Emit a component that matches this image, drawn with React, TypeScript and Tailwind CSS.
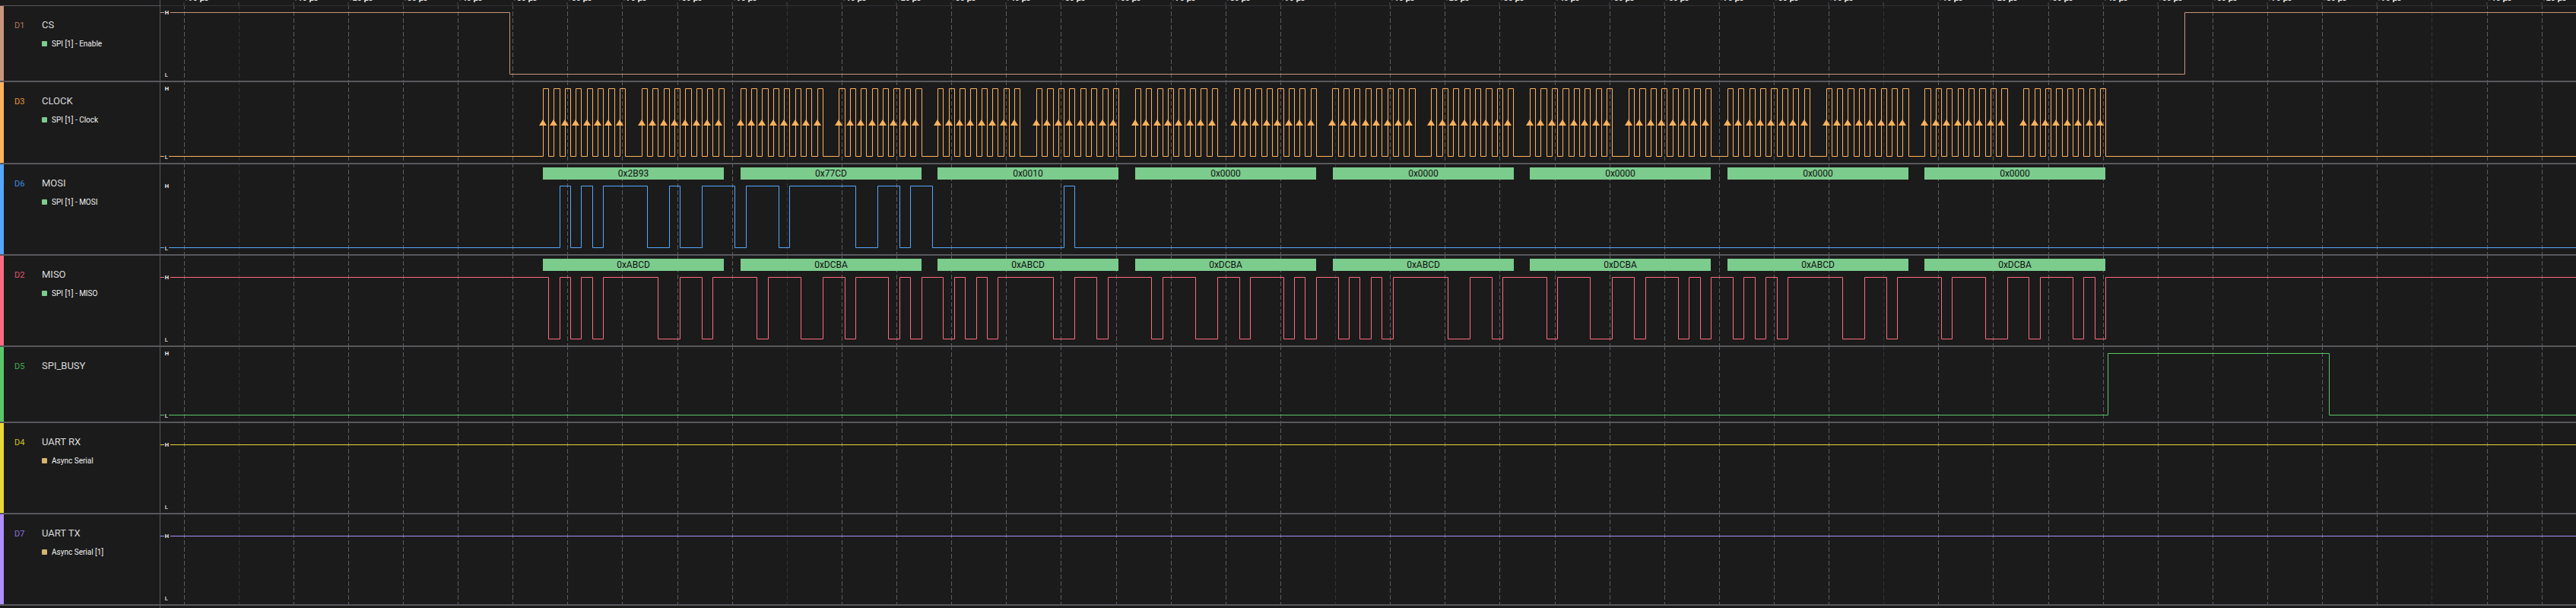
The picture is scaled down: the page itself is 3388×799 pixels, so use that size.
const BASE = 242.01;
const STEP = 72.12;
const PERIOD = STEP / 5;
const HALF = PERIOD / 2;
const START = 714.4;
const LEFT = 211;
const WIDTH = 3388 - LEFT;

const wordStart = (w: number) => START + w * 18 * PERIOD;
const rise = (w: number, i: number) => wordStart(w) + (i + (i > 7 ? 1 : 0)) * PERIOD;
const fall = (w: number, i: number) => rise(w, i) + HALF;

const MOSI = [0x2b93, 0x77cd, 0x0010, 0, 0, 0, 0, 0];
const MISO = [0xabcd, 0xdcba, 0xabcd, 0xdcba, 0xabcd, 0xdcba, 0xabcd, 0xdcba];
const hex = (v: number) => '0x' + v.toString(16).toUpperCase().padStart(4, '0');

const clockEdges: number[] = [];
const clockRises: number[] = [];
for (let w = 0; w < 8; w++) {
  for (let i = 0; i < 16; i++) {
    clockEdges.push(rise(w, i), fall(w, i));
    clockRises.push(rise(w, i));
  }
}

// Data lines change on the falling clock edge; "early" lines load the next word right after the last bit.
function dataEdges(words: number[], idle: number, early: boolean) {
  const edges: number[] = [];
  let level = idle;
  const set = (v: number, t: number) => {
    if (v !== level) {
      edges.push(t);
      level = v;
    }
  };
  words.forEach((word, w) => {
    for (let i = 0; i < 16; i++) {
      const bit = (word >> (15 - i)) & 1;
      const t = i > 0 ? fall(w, i - 1) : early && w > 0 ? fall(w - 1, 15) : wordStart(w) - HALF;
      set(bit, t);
    }
  });
  set(idle, early ? fall(7, 15) : wordStart(8) - HALF);
  return edges;
}

type Channel = {
  id: string;
  name: string;
  sub?: string;
  dot?: string;
  bar: string;
  text: string;
  stroke: string;
  height: string;
  h: number;
  hi: number;
  lo: number;
  start: number;
  edges: number[];
  words?: number[];
  arrows?: boolean;
};

const CHANNELS: Channel[] = [
  { id: 'D1', name: 'CS', sub: 'SPI [1] - Enable', dot: 'bg-[#7ccc8d]', bar: 'bg-[#c9967c]', text: 'text-[#b0775a]', stroke: '#c9967c', height: 'h-[100px]', h: 98, hi: 8, lo: 89, start: 1, edges: [670, 2873] },
  { id: 'D3', name: 'CLOCK', sub: 'SPI [1] - Clock', dot: 'bg-[#7ccc8d]', bar: 'bg-[#ffb25c]', text: 'text-[#e5963c]', stroke: '#ffb25c', height: 'h-[108px]', h: 106, hi: 8, lo: 97, start: 0, edges: clockEdges, arrows: true },
  { id: 'D6', name: 'MOSI', sub: 'SPI [1] - MOSI', dot: 'bg-[#7ccc8d]', bar: 'bg-[#54a8ff]', text: 'text-[#3b8be0]', stroke: '#54a8ff', height: 'h-[120px]', h: 118, hi: 28, lo: 109, start: 0, edges: dataEdges(MOSI, 0, false), words: MOSI },
  { id: 'D2', name: 'MISO', sub: 'SPI [1] - MISO', dot: 'bg-[#7ccc8d]', bar: 'bg-[#ff6b7e]', text: 'text-[#e0566a]', stroke: '#ff6b7e', height: 'h-[120px]', h: 118, hi: 28, lo: 109, start: 1, edges: dataEdges(MISO, 1, true), words: MISO },
  { id: 'D5', name: 'SPI_BUSY', bar: 'bg-[#59c767]', text: 'text-[#41b050]', stroke: '#59c767', height: 'h-[100px]', h: 98, hi: 8, lo: 89, start: 0, edges: [2772, 3063] },
  { id: 'D4', name: 'UART RX', sub: 'Async Serial', dot: 'bg-[#d4b56d]', bar: 'bg-[#e8d834]', text: 'text-[#cfc02a]', stroke: '#e8d834', height: 'h-[120px]', h: 118, hi: 28, lo: 109, start: 1, edges: [] },
  { id: 'D7', name: 'UART TX', sub: 'Async Serial [1]', dot: 'bg-[#d4b56d]', bar: 'bg-[#ae8fff]', text: 'text-[#8d70dc]', stroke: '#ae8fff', height: 'h-[120px]', h: 118, hi: 28, lo: 109, start: 1, edges: [] },
];

function wave(ch: Channel) {
  let level = ch.start;
  const y = () => (level ? ch.hi : ch.lo) + 0.5;
  let d = `M0 ${y()}`;
  for (const e of ch.edges) {
    d += `H${Math.floor(e) - LEFT + 0.5}`;
    level = 1 - level;
    d += `V${y()}`;
  }
  return d + `H${WIDTH}`;
}

const TICKS = Array.from({ length: 44 }, (_, i) => ({
  x: Math.floor(BASE + i * STEP) - LEFT,
  major: i % 10 === 1,
  label: `+${((i + 9) % 10) * 10} µs`,
}));

function Lane({ ch }: { ch: Channel }) {
  return (
    <div className="relative min-w-0 flex-1 overflow-hidden">
      <svg className="block" width={WIDTH} height={ch.h} fill="none">
        {TICKS.map((t) => (
          <path key={t.x} d={`M${t.x + 0.5} 0V${ch.h}`} stroke={t.major ? '#343437' : '#5d5d62'} strokeDasharray="6 3" strokeDashoffset="2" />
        ))}
        <path d={wave(ch)} stroke={ch.stroke} />
        {ch.arrows &&
          clockRises.map((r) => {
            const x = Math.floor(r) - LEFT;
            return <path key={r} d={`M${x} 49L${x + 5} 57H${x - 5}Z`} fill={ch.stroke} />;
          })}
        <rect x="5" y={ch.hi - 4} width="8" height="9" rx="1" fill="#1b1b1b" />
        <rect x="5" y={ch.lo - 4} width="6" height="9" rx="1" fill="#1b1b1b" />
        <text x="5.7" y={ch.hi + 3} fontSize="7.5" fontWeight="700" fill="#eee" fontFamily="Roboto, sans-serif">H</text>
        <text x="5.7" y={ch.lo + 4} fontSize="7.5" fontWeight="700" fill="#ccc" fontFamily="Roboto, sans-serif">L</text>
      </svg>
      {ch.words?.map((w, i) => (
        <div
          key={i}
          className="absolute top-1 flex h-4 w-[238px] items-center justify-center bg-[#7ccc8d] text-[12px] leading-4 text-[#111]"
          style={{ left: Math.floor(wordStart(i) + 0.1) - LEFT }}
        >
          {hex(w)}
        </div>
      ))}
    </div>
  );
}

export default function App() {
  return (
    <div className="flex h-[799px] w-[3388px] flex-col overflow-hidden bg-[#1b1b1b] font-['Roboto',sans-serif]">
      <header className="flex h-2 shrink-0">
        <div className="w-[211px] shrink-0 border-r border-b border-[#58585d]" />
        <div className="flex-1 overflow-hidden border-b border-[#303033]">
          <svg className="block" width={WIDTH} height="7">
            {TICKS.map((t) => (
              <g key={t.x}>
                <rect x={t.x - 1} y="3" width="2" height="4" fill="#343437" />
                {!t.major && (
                  <text x={t.x} y="1.2" fontSize="10.5" fontWeight="700" fill="#e8e8e8" fontFamily="Roboto, sans-serif">
                    {t.label}
                  </text>
                )}
              </g>
            ))}
          </svg>
        </div>
      </header>
      {CHANNELS.map((ch) => (
        <section key={ch.id} className={`flex shrink-0 border-b-2 border-[#58585d] ${ch.height}`}>
          <div className="flex w-[211px] shrink-0 border-r border-[#58585d]">
            <div className={`w-[5px] ${ch.bar}`} />
            <div className={`w-[50px] pt-[17px] pl-[14px] text-[11px] leading-[17px] ${ch.text}`}>{ch.id}</div>
            <div className="pt-4">
              <div className="text-[13px] leading-[18px] text-[#dadada]">{ch.name}</div>
              {ch.sub && (
                <div className="mt-[7px] flex items-center gap-1.5">
                  <span className={`size-[7px] rounded-[1px] ${ch.dot}`} />
                  <span className="origin-left translate-y-px scale-x-[0.91] text-[11px] leading-4 text-[#f0f0f0]">{ch.sub}</span>
                </div>
              )}
            </div>
          </div>
          <Lane ch={ch} />
        </section>
      ))}
      <div className="w-[211px] flex-1 border-r border-[#58585d]" />
    </div>
  );
}
